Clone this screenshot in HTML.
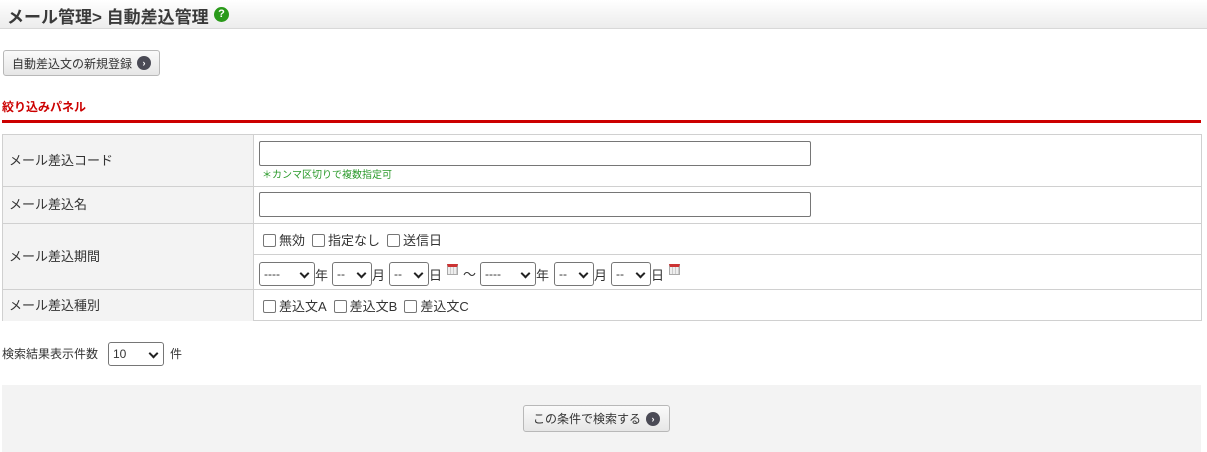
<!DOCTYPE html>
<html><head><meta charset="utf-8"><style>
*{box-sizing:border-box;margin:0;padding:0}
body{width:1207px;height:452px;position:relative;background:#fff;font-family:"Liberation Sans","Noto Sans CJK JP",sans-serif;font-size:13px;color:#333;overflow:hidden}
.a{position:absolute}
.hdr{left:0;top:0;width:1207px;height:29px;background:linear-gradient(#fff,#ececec);border-bottom:1px solid #d8d8d8}
.btn{border:1px solid #b8b8b8;border-radius:3px;background:linear-gradient(#fafafa,#e6e6e6);font-size:12px;color:#333;display:flex;align-items:center;justify-content:center;gap:5px}
.arr{width:14px;height:14px;border-radius:50%;background:#4a4a55;color:#fff;font-size:9px;line-height:14px;text-align:center;font-weight:bold}
.lab{background:#f3f3f3;left:3px;width:250px;border-top:1px solid #d0d0d0;padding-left:6px;padding-bottom:3px;display:flex;align-items:center;font-size:13px}
.cell{left:253px;width:948px;border-top:1px solid #d0d0d0;border-left:1px solid #d0d0d0}
.inp{border:1px solid #767676;border-radius:2px;background:#fff;height:25px;width:552px}
.sel{border:1px solid #767676;border-radius:3px;height:24px;background:#fff;font-size:12px;padding-left:4px;line-height:22px}
.sel:after{content:"";position:absolute;right:6px;top:7px;width:5px;height:5px;border-right:2px solid #222;border-bottom:2px solid #222;transform:rotate(45deg)}
.cb{display:inline-block;width:13px;height:13px;border:1px solid #767676;border-radius:2px;vertical-align:-2px;margin-right:3px;background:#fff}
.chk{font-size:13px;white-space:nowrap}
.chk span.g{margin-right:7px}
.cal{width:11px;height:11px;border:1px solid #aaa;border-top:3px solid #c33;background:repeating-linear-gradient(90deg,#eee 0 2px,#ccc 2px 3px)}
</style></head><body>
<div class="a hdr"></div>
<div class="a" style="left:7px;top:3px;font-size:17px;font-weight:bold;color:#3a3a3a">メール管理&gt; 自動差込管理</div>
<div class="a" style="left:214px;top:7px;width:15px;height:15px;border-radius:50%;background:#2a9a1a;color:#fff;font-size:11px;font-weight:bold;text-align:center;line-height:15px">?</div>
<div class="a btn" style="left:3px;top:50px;width:157px;height:26px">自動差込文の新規登録<span class="arr">›</span></div>
<div class="a" style="left:2px;top:98px;font-size:12px;color:#c00;font-weight:bold">絞り込みパネル</div>
<div class="a" style="left:2px;top:120px;width:1199px;height:3px;background:#c00"></div>
<div class="a" style="left:2px;top:134px;width:1200px;height:187px;border:1px solid #d0d0d0;border-top:none"></div>
<div class="a lab" style="top:134px;height:52px">メール差込コード</div>
<div class="a cell" style="top:134px;height:52px"><div class="a inp" style="left:5px;top:6px"></div><div class="a" style="left:8px;top:31px;font-size:10px;color:#2a9a2a">＊カンマ区切りで複数指定可</div></div>
<div class="a lab" style="top:186px;height:37px">メール差込名</div>
<div class="a cell" style="top:186px;height:37px"><div class="a inp" style="left:5px;top:5px"></div></div>
<div class="a lab" style="top:223px;height:66px">メール差込期間</div>
<div class="a cell" style="top:223px;height:31px"><div class="a chk" style="left:9px;top:6px"><span class="cb"></span><span class="g">無効</span><span class="cb"></span><span class="g">指定なし</span><span class="cb"></span>送信日</div></div>
<div class="a cell" style="top:254px;height:35px">
<div class="a sel" style="left:5px;top:7px;width:56px">----</div><div class="a" style="left:61px;top:10px">年</div>
<div class="a sel" style="left:78px;top:7px;width:40px">--</div><div class="a" style="left:118px;top:10px">月</div>
<div class="a sel" style="left:135px;top:7px;width:40px">--</div><div class="a" style="left:175px;top:10px">日</div>
<div class="a cal" style="left:193px;top:9px"></div><div class="a" style="left:209px;top:9px">～</div>
<div class="a sel" style="left:226px;top:7px;width:56px">----</div><div class="a" style="left:282px;top:10px">年</div>
<div class="a sel" style="left:300px;top:7px;width:40px">--</div><div class="a" style="left:340px;top:10px">月</div>
<div class="a sel" style="left:357px;top:7px;width:40px">--</div><div class="a" style="left:397px;top:10px">日</div>
<div class="a cal" style="left:415px;top:9px"></div></div>
<div class="a lab" style="top:289px;height:32px">メール差込種別</div>
<div class="a cell" style="top:289px;height:32px"><div class="a chk" style="left:9px;top:6px"><span class="cb"></span><span class="g">差込文A</span><span class="cb"></span><span class="g">差込文B</span><span class="cb"></span>差込文C</div></div>
<div class="a" style="left:2px;top:345px;font-size:12px">検索結果表示件数</div>
<div class="a sel" style="left:108px;top:342px;width:56px">10</div>
<div class="a" style="left:170px;top:345px;font-size:12px">件</div>
<div class="a" style="left:2px;top:385px;width:1199px;height:67px;background:#f3f3f3"></div>
<div class="a btn" style="left:523px;top:405px;width:147px;height:27px">この条件で検索する<span class="arr">›</span></div>
</body></html>
